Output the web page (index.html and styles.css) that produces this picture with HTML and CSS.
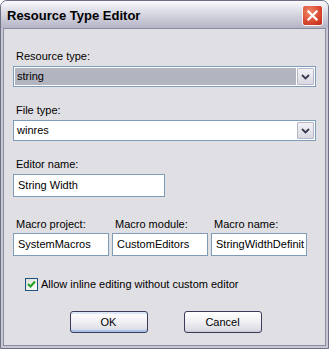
FILE: index.html
```html
<!DOCTYPE html>
<html lang="en">
<head>
    <meta charset="UTF-8">
    <title>Resource Type Editor</title>
    <link rel="stylesheet" href="styles.css">
</head>
<body>
    <div class="window">
        <!-- Title bar -->
        <div class="titlebar">
            <span class="title">Resource Type Editor</span>
            <span class="close-btn">
                <svg viewBox="0 0 21 21" width="21" height="21">
                    <path d="M6 6 L15 15 M15 6 L6 15" stroke="#fff" stroke-width="2.4" stroke-linecap="square"/>
                </svg>
            </span>
        </div>

        <!-- Dialog body -->
        <div class="client">
            <div class="label first">Resource type:</div>
            <div class="combo combo-selected">
                <span class="combo-text">string</span>
                <span class="combo-btn">
                    <svg viewBox="0 0 9 6" width="9" height="6"><path d="M1 1 L4.5 4.5 L8 1" fill="none" stroke="#3a3a50" stroke-width="1.8"/></svg>
                </span>
            </div>

            <div class="label">File type:</div>
            <div class="combo">
                <span class="combo-text">winres</span>
                <span class="combo-btn">
                    <svg viewBox="0 0 9 6" width="9" height="6"><path d="M1 1 L4.5 4.5 L8 1" fill="none" stroke="#3a3a50" stroke-width="1.8"/></svg>
                </span>
            </div>

            <div class="label">Editor name:</div>
            <div class="textbox editor-name">String Width</div>

            <div class="macros">
                <div class="label">Macro project:</div>
                <div class="label">Macro module:</div>
                <div class="label">Macro name:</div>
                <div class="textbox">SystemMacros</div>
                <div class="textbox">CustomEditors</div>
                <div class="textbox">StringWidthDefinit</div>
            </div>

            <div class="check-row">
                <span class="checkbox">
                    <svg viewBox="0 0 11 11" width="11" height="11"><path d="M2 5 L4.5 7.5 L9 2.5" fill="none" stroke="#21a121" stroke-width="2"/></svg>
                </span>
                <span>Allow inline editing without custom editor</span>
            </div>

            <div class="buttons">
                <span class="btn btn-default">OK</span>
                <span class="btn">Cancel</span>
            </div>
        </div>
    </div>
</body>
</html>
```

FILE: styles.css
```css
body {
    margin: 0;
    padding: 0;
    background-color: #ffffff;
    font-family: "Liberation Sans", Arial, sans-serif;
    font-size: 11px;
    color: #000;
}

/* Window frame */
.window {
    width: 329px;
    height: 349px;
    box-sizing: border-box;
    border: 1px solid #6f6f86;
    border-radius: 7px 7px 0 0;
    background-color: #c6c6d4;
    padding: 0 2px 2px;
    display: flex;
    flex-direction: column;
}

.titlebar {
    height: 27px;
    margin: 0 -2px;
    padding: 0 4px 0 6px;
    border-radius: 6px 6px 0 0;
    background: linear-gradient(#fbfbfd 0%, #e6e6ee 25%, #cfcfdb 60%, #b4b4c6 100%);
    display: flex;
    align-items: center;
    justify-content: space-between;
}

.title {
    font-weight: bold;
    font-size: 13px;
    color: #000;
    margin-top: 2px;
}

.close-btn {
    width: 21px;
    height: 21px;
    box-sizing: border-box;
    border: 1px solid #f4f4f8;
    border-radius: 3px;
    background: radial-gradient(circle at 35% 30%, #f08a6c, #d8462e 60%, #b82a1c);
    display: flex;
    align-items: center;
    justify-content: center;
    margin-top: 2px;
    margin-right: 1px;
}

.close-btn svg {
    width: 19px;
    height: 19px;
}

/* Client area */
.client {
    flex: 1;
    background-color: #e0dfe3;
    border: 1px solid #8b8ba0;
    padding: 21px 9px 0 9px;
}

.label {
    line-height: 13px;
    height: 13px;
    padding-left: 3px;
    margin-top: 17px;
    margin-bottom: 3px;
    white-space: nowrap;
}

.label.first {
    margin-top: 0;
}

/* Combo boxes */
.combo {
    height: 21px;
    box-sizing: border-box;
    border: 1px solid #7f9db9;
    background-color: #fff;
    display: flex;
    align-items: stretch;
    padding: 1px;
}

.combo-text {
    flex: 1;
    line-height: 17px;
    padding-left: 2px;
    margin-right: 1px;
}

.combo-selected .combo-text {
    background-color: #b2b4bf;
}

.combo-btn {
    width: 17px;
    box-sizing: border-box;
    border: 1px solid #b6b8c8;
    border-radius: 1px;
    background: linear-gradient(#f2f2f6, #d8d8e2);
    display: flex;
    align-items: center;
    justify-content: center;
}

/* Text boxes */
.textbox {
    height: 23px;
    box-sizing: border-box;
    border: 1px solid #7f9db9;
    background-color: #fff;
    line-height: 21px;
    padding-left: 4px;
    white-space: nowrap;
    overflow: hidden;
}

.editor-name {
    width: 152px;
    margin-top: 2px;
}

.macros {
    display: grid;
    grid-template-columns: 96px 96px 96px;
    column-gap: 3px;
    margin-top: 21px;
}

.macros .label {
    margin-top: 0;
    margin-bottom: 2px;
}

/* Checkbox */
.check-row {
    display: flex;
    align-items: center;
    margin-top: 22px;
    margin-left: 12px;
    gap: 3px;
    line-height: 13px;
}

.checkbox {
    width: 13px;
    height: 13px;
    box-sizing: border-box;
    border: 1px solid #1c5180;
    background: linear-gradient(135deg, #dcdcd7, #ffffff);
    display: flex;
    align-items: center;
    justify-content: center;
}

/* Buttons */
.buttons {
    display: flex;
    justify-content: center;
    gap: 36px;
    margin-top: 20px;
    margin-left: 2px;
}

.btn {
    width: 78px;
    height: 22px;
    box-sizing: border-box;
    border: 1px solid #3c3c5a;
    border-radius: 3px;
    background: linear-gradient(#ffffff, #f0f0f4 50%, #dcdce4 90%, #c8c8d4);
    text-align: center;
    line-height: 20px;
}

.btn-default {
    box-shadow: inset 0 -2px 0 #a8c4ec, inset 0 2px 0 #dce8fa;
}
```
